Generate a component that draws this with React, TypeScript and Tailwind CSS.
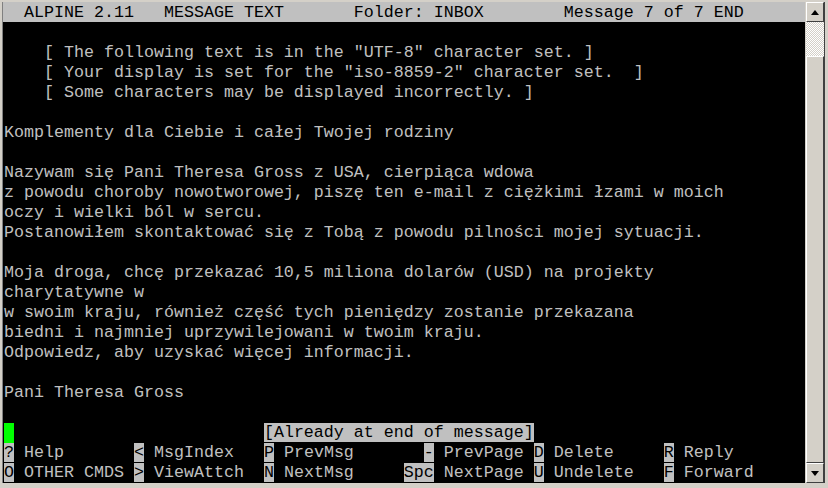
import React from 'react';

type Seg = { t: string; hl?: boolean };

const body: string[] = [
  '',
  '    [ The following text is in the "UTF-8" character set. ]',
  '    [ Your display is set for the "iso-8859-2" character set.  ]',
  '    [ Some characters may be displayed incorrectly. ]',
  '',
  'Komplementy dla Ciebie i całej Twojej rodziny',
  '',
  'Nazywam się Pani Theresa Gross z USA, cierpiąca wdowa',
  'z powodu choroby nowotworowej, piszę ten e-mail z ciężkimi łzami w moich',
  'oczy i wielki ból w sercu.',
  'Postanowiłem skontaktować się z Tobą z powodu pilności mojej sytuacji.',
  '',
  'Moja droga, chcę przekazać 10,5 miliona dolarów (USD) na projekty',
  'charytatywne w',
  'w swoim kraju, również część tych pieniędzy zostanie przekazana',
  'biedni i najmniej uprzywilejowani w twoim kraju.',
  'Odpowiedz, aby uzyskać więcej informacji.',
  '',
  'Pani Theresa Gross',
  '',
];

// key labels in pine's two-line menu
const menu1: Seg[] = [
  { t: '?', hl: true }, { t: ' Help       ' },
  { t: '<', hl: true }, { t: ' MsgIndex   ' },
  { t: 'P', hl: true }, { t: ' PrevMsg       ' },
  { t: '-', hl: true }, { t: ' PrevPage ' },
  { t: 'D', hl: true }, { t: ' Delete     ' },
  { t: 'R', hl: true }, { t: ' Reply' },
];

const menu2: Seg[] = [
  { t: 'O', hl: true }, { t: ' OTHER CMDS ' },
  { t: '>', hl: true }, { t: ' ViewAttch  ' },
  { t: 'N', hl: true }, { t: ' NextMsg     ' },
  { t: 'Spc', hl: true }, { t: ' NextPage ' },
  { t: 'U', hl: true }, { t: ' Undelete   ' },
  { t: 'F', hl: true }, { t: ' Forward' },
];

function Row({ children, className = '' }: { children?: React.ReactNode; className?: string }) {
  return <div className={`h-[20px] leading-[20px] whitespace-pre ${className}`}>{children}</div>;
}

function MenuRow({ segs }: { segs: Seg[] }) {
  return (
    <Row>
      {segs.map((s, i) => (
        <span key={i} className={s.hl ? 'bg-[#c0c0c0] text-black' : ''}>{s.t}</span>
      ))}
    </Row>
  );
}

export default function App() {
  return (
    <div className="w-[828px] h-[488px] bg-[#d4d0c8] flex pt-[2px] pl-[2px] overflow-hidden">
      {/* terminal */}
      <div
        className="w-[803px] h-[481px] bg-black border-l border-[#808080] text-[#c0c0c0] text-[16.667px]"
        style={{ fontFamily: '"Liberation Mono", "Courier New", monospace' }}
      >
        <Row className="bg-[#c0c0c0] text-black pl-px pt-px">
          {'  ALPINE 2.11   MESSAGE TEXT       Folder: INBOX        Message 7 of 7 END'}
        </Row>
        <div className="pl-px pt-px">
          {body.map((l, i) => (
            <Row key={i}>{l}</Row>
          ))}
          <Row>
            <span className="inline-block w-[10px] h-[20px] align-top bg-[#00ff00]" />
            {'                         '}
            <span className="bg-[#c0c0c0] text-black">[Already at end of message]</span>
          </Row>
          <MenuRow segs={menu1} />
          <MenuRow segs={menu2} />
        </div>
      </div>

      {/* scrollbar */}
      <div className="w-[20px] h-[481px] flex flex-col pl-px border-r border-[#404040]">
        <div className="h-[20px] bg-[#d4d0c8] border-t border-l border-white border-r border-b border-r-[#404040] border-b-[#404040] flex items-center justify-center">
          <svg width="8" height="5" viewBox="0 0 8 5"><path d="M4 0L8 5H0Z" fill="#000" /></svg>
        </div>
        <div className="h-[34px] bg-[repeating-conic-gradient(#d4d0c8_0_25%,#ffffff_0_50%)] bg-[length:2px_2px]" />
        <div className="flex-1 bg-[#d4d0c8] border-t border-l border-white border-r border-b border-r-[#404040] border-b-[#404040]" />
        <div className="h-[20px] bg-[#d4d0c8] border-t border-l border-white border-r border-b border-r-[#404040] border-b-[#404040] flex items-center justify-center">
          <svg width="8" height="5" viewBox="0 0 8 5"><path d="M0 0H8L4 5Z" fill="#000" /></svg>
        </div>
      </div>
    </div>
  );
}
